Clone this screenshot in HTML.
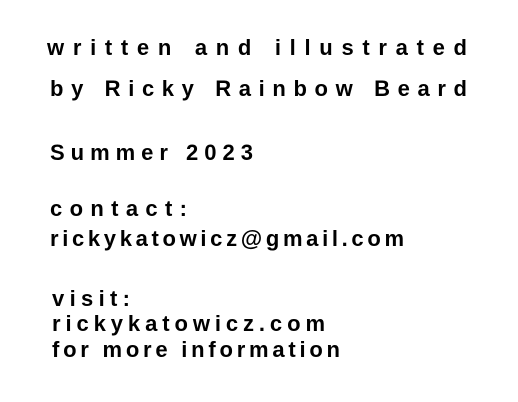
<!DOCTYPE html>
<html><head><meta charset="utf-8"><style>
html,body{margin:0;padding:0;background:#fff;width:518px;height:402px;overflow:hidden}
text{font-family:"Liberation Sans",sans-serif;font-weight:bold;fill:#000;font-size:22px}
</style></head><body>
<svg width="518" height="402" viewBox="0 0 518 402" xmlns="http://www.w3.org/2000/svg">
<text x="47" y="55" textLength="420" lengthAdjust="spacing">written and illustrated</text>
<text x="50" y="96" textLength="417" lengthAdjust="spacing">by Ricky Rainbow Beard</text>
<text x="50" y="160" textLength="203" lengthAdjust="spacing">Summer 2023</text>
<text x="50" y="216" textLength="137" lengthAdjust="spacing">contact:</text>
<text x="50" y="246" textLength="354" lengthAdjust="spacing">rickykatowicz@gmail.com</text>
<text x="52" y="306" textLength="78" lengthAdjust="spacing">visit:</text>
<text x="52" y="331" textLength="273" lengthAdjust="spacing">rickykatowicz.com</text>
<text x="52" y="357" textLength="288" lengthAdjust="spacing">for more information</text>
</svg>
</body></html>
